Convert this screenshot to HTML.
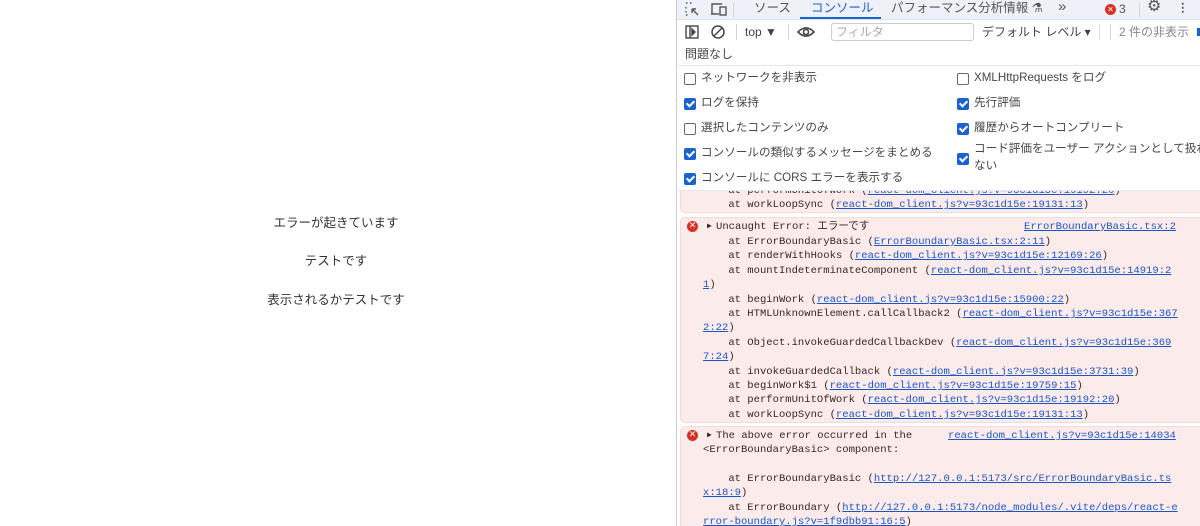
<!DOCTYPE html>
<html><head><meta charset="utf-8"><style>
*{margin:0;padding:0;box-sizing:border-box}
body{width:1200px;height:526px;overflow:hidden;background:#fff;position:relative;font-family:"Liberation Sans","Noto Sans CJK JP",sans-serif;}
.pg{position:absolute;left:0;width:672px;text-align:center;font-size:12.5px;color:#333;line-height:16px}
#dt{position:absolute;left:676px;top:0;width:524px;height:526px;border-left:1px solid #ccc;background:#fff;overflow:hidden}
.a{position:absolute;white-space:nowrap}
.t{font-size:11.6px;color:#474747;line-height:16px}
.cb{position:absolute;width:12px;height:12px;border:1.5px solid #6a6a6a;border-radius:2px;background:#fff}
.cb.on{background:#1a62d4;border-color:#1a62d4}
.cb.on:after{content:"";position:absolute;left:3px;top:0px;width:3px;height:6px;border:solid #fff;border-width:0 2px 2px 0;transform:rotate(45deg)}
.blk{position:absolute;left:3px;width:530px;background:#fcebeb;border:1px solid #f6d9d9;border-radius:5px}
.m{position:absolute;left:26px;font-family:"Liberation Mono","DejaVu Sans Mono","Noto Sans CJK JP",monospace;font-size:10.55px;line-height:14.4px;color:#3b2424;white-space:pre}
.m u,u.l{color:#1a56c8;text-decoration:underline}
.x{position:absolute;left:10px;width:11px;height:11px;border-radius:50%;background:#d93025;color:#fff;font-size:9px;line-height:11px;text-align:center;font-family:"DejaVu Sans",sans-serif;font-weight:bold}
</style></head><body>
<div class="pg" style="top:215px">エラーが起きています</div>
<div class="pg" style="top:253px">テストです</div>
<div class="pg" style="top:292px">表示されるかテストです</div>

<div id="dt">
 <div class="a" style="left:0;top:0;width:524px;height:20px;background:#eef1f7;border-bottom:1px solid #dfe3ea"></div>
 <svg class="a" style="left:7px;top:1px" width="16" height="16" viewBox="0 0 16 16" fill="none" stroke="#555" stroke-width="1.4"><path d="M2 2h2M6 2h2M2 6v2M2 10v2M2 14h2" stroke-dasharray="1.5 1.5"/><path d="M8 8l6 6M8 8h4M8 8v4"/></svg>
 <svg class="a" style="left:33px;top:1px" width="18" height="16" viewBox="0 0 18 16" fill="none" stroke="#555" stroke-width="1.4"><path d="M2 13V3h10M1 13h8"/><rect x="10" y="6" width="6" height="8"/></svg>
 <div class="a" style="left:56px;top:3px;width:1px;height:14px;background:#d0d4da"></div>
 <div class="a t" style="left:77px;top:0px;color:#555;font-size:12.5px">ソース</div>
 <div class="a t" style="left:134px;top:0px;color:#1a62d4;font-size:12.5px">コンソール</div>
 <div class="a" style="left:123px;top:17px;width:81px;height:2px;background:#1a62d4"></div>
 <div class="a t" style="left:214px;top:0px;color:#555;font-size:12.5px">パフォーマンス分析情報 ⚗</div>
 <div class="a t" style="left:381px;top:-1px;color:#555;font-size:15px">»</div>
 <div class="a x" style="left:428px;top:4px;font-size:8px">✕</div>
 <div class="a t" style="left:442px;top:1px;color:#555;font-size:12px">3</div>
 <div class="a" style="left:462px;top:3px;width:1px;height:14px;background:#d0d4da"></div>
 <div class="a t" style="left:470px;top:-1px;color:#555;font-size:16px">⚙</div>
 <div class="a t" style="left:500px;top:0px;color:#555;font-weight:bold">⋮</div>

 <svg class="a" style="left:8px;top:25px" width="14" height="14" viewBox="0 0 14 14" fill="none" stroke="#444" stroke-width="1.4"><rect x="1" y="1" width="12" height="12"/><path d="M5 1v12"/><path d="M7 4l3 3-3 3z" fill="#444"/></svg>
 <svg class="a" style="left:34px;top:25px" width="14" height="14" viewBox="0 0 14 14" fill="none" stroke="#444" stroke-width="1.5"><circle cx="7" cy="7" r="6"/><path d="M3 11L11 3"/></svg>
 <div class="a" style="left:59px;top:24px;width:1px;height:16px;background:#d0d4da"></div>
 <div class="a t" style="left:68px;top:24px;font-size:12px;color:#444">top ▼</div>
 <div class="a" style="left:111px;top:24px;width:1px;height:16px;background:#d0d4da"></div>
 <svg class="a" style="left:120px;top:25px" width="18" height="14" viewBox="0 0 18 14" fill="none" stroke="#444" stroke-width="1.6"><path d="M1 7Q9-1 17 7Q9 15 1 7z"/><circle cx="9" cy="7" r="2.5"/></svg>
 <div class="a" style="left:154px;top:23px;width:143px;height:18px;border:1px solid #ccc;border-radius:3px"></div>
 <div class="a t" style="left:159px;top:24px;color:#aaa;font-size:12px">フィルタ</div>
 <div class="a t" style="left:305px;top:24px;color:#444;font-size:12px">デフォルト レベル ▾</div>
 <div class="a" style="left:422px;top:24px;width:1px;height:16px;background:#e0e4ea"></div>
 <div class="a" style="left:433px;top:24px;width:1px;height:16px;background:#d0d4da"></div>
 <div class="a t" style="left:442px;top:24px;color:#888;font-size:12px">2 件の非表示</div>
 <div class="a" style="left:520px;top:28px;width:4px;height:8px;background:#1a62d4"></div>
 <div class="a t" style="left:8px;top:46px;color:#444;font-size:12px">問題なし</div>
 <div class="a" style="left:0;top:65px;width:524px;height:1px;background:#e4e8f0"></div>

 <!-- console -->
 <div class="blk" style="top:150px;height:63px"></div>
 <div class="m" style="top:184px">    at performUnitOfWork (<u>react-dom_client.js?v=93c1d15e:19192:20</u>)
    at workLoopSync (<u>react-dom_client.js?v=93c1d15e:19131:13</u>)</div>
 <div class="blk" style="top:217px;height:206px"></div>
 <div class="x" style="top:221px">✕</div>
 <div class="m" style="left:30px;top:220px;font-size:8px">▶</div>
 <div class="m" style="left:39px;top:220px">Uncaught Error: エラーです</div>
 <div class="m" style="left:347px;top:220px"><u>ErrorBoundaryBasic.tsx:2</u></div>
 <div class="m" style="top:235px">    at ErrorBoundaryBasic (<u>ErrorBoundaryBasic.tsx:2:11</u>)
    at renderWithHooks (<u>react-dom_client.js?v=93c1d15e:12169:26</u>)
    at mountIndeterminateComponent (<u>react-dom_client.js?v=93c1d15e:14919:2</u>
<u>1</u>)
    at beginWork (<u>react-dom_client.js?v=93c1d15e:15900:22</u>)
    at HTMLUnknownElement.callCallback2 (<u>react-dom_client.js?v=93c1d15e:367</u>
<u>2:22</u>)
    at Object.invokeGuardedCallbackDev (<u>react-dom_client.js?v=93c1d15e:369</u>
<u>7:24</u>)
    at invokeGuardedCallback (<u>react-dom_client.js?v=93c1d15e:3731:39</u>)
    at beginWork$1 (<u>react-dom_client.js?v=93c1d15e:19759:15</u>)
    at performUnitOfWork (<u>react-dom_client.js?v=93c1d15e:19192:20</u>)
    at workLoopSync (<u>react-dom_client.js?v=93c1d15e:19131:13</u>)</div>
 <div class="blk" style="top:426px;height:120px"></div>
 <div class="x" style="top:430px">✕</div>
 <div class="m" style="left:30px;top:429px;font-size:8px">▶</div>
 <div class="m" style="left:39px;top:429px">The above error occurred in the</div>
 <div class="m" style="left:271px;top:429px"><u>react-dom_client.js?v=93c1d15e:14034</u></div>
 <div class="m" style="top:443px">&lt;ErrorBoundaryBasic&gt; component:

    at ErrorBoundaryBasic (<u>http://127.0.0.1:5173/src/ErrorBoundaryBasic.ts</u>
<u>x:18:9</u>)
    at ErrorBoundary (<u>http://127.0.0.1:5173/node_modules/.vite/deps/react-e</u>
<u>rror-boundary.js?v=1f9dbb91:16:5</u>)</div>

 <!-- settings panel -->
 <div class="a" style="left:0;top:66px;width:524px;height:125px;background:#fff;border-bottom:1px solid #e4e8f0"></div>
 <div class="cb" style="left:7px;top:73px"></div><div class="a t" style="left:24px;top:70px">ネットワークを非表示</div>
 <div class="cb on" style="left:7px;top:98px"></div><div class="a t" style="left:24px;top:95px">ログを保持</div>
 <div class="cb" style="left:7px;top:123px"></div><div class="a t" style="left:24px;top:120px">選択したコンテンツのみ</div>
 <div class="cb on" style="left:7px;top:148px"></div><div class="a t" style="left:24px;top:145px">コンソールの類似するメッセージをまとめる</div>
 <div class="cb on" style="left:7px;top:173px"></div><div class="a t" style="left:24px;top:170px">コンソールに CORS エラーを表示する</div>
 <div class="cb" style="left:280px;top:73px"></div><div class="a t" style="left:297px;top:70px">XMLHttpRequests をログ</div>
 <div class="cb on" style="left:280px;top:98px"></div><div class="a t" style="left:297px;top:95px">先行評価</div>
 <div class="cb on" style="left:280px;top:123px"></div><div class="a t" style="left:297px;top:120px">履歴からオートコンプリート</div>
 <div class="cb on" style="left:280px;top:153px"></div><div class="a t" style="left:297px;top:141px">コード評価をユーザー アクションとして扱わ</div><div class="a t" style="left:297px;top:158px">ない</div>
</div>
</body></html>
